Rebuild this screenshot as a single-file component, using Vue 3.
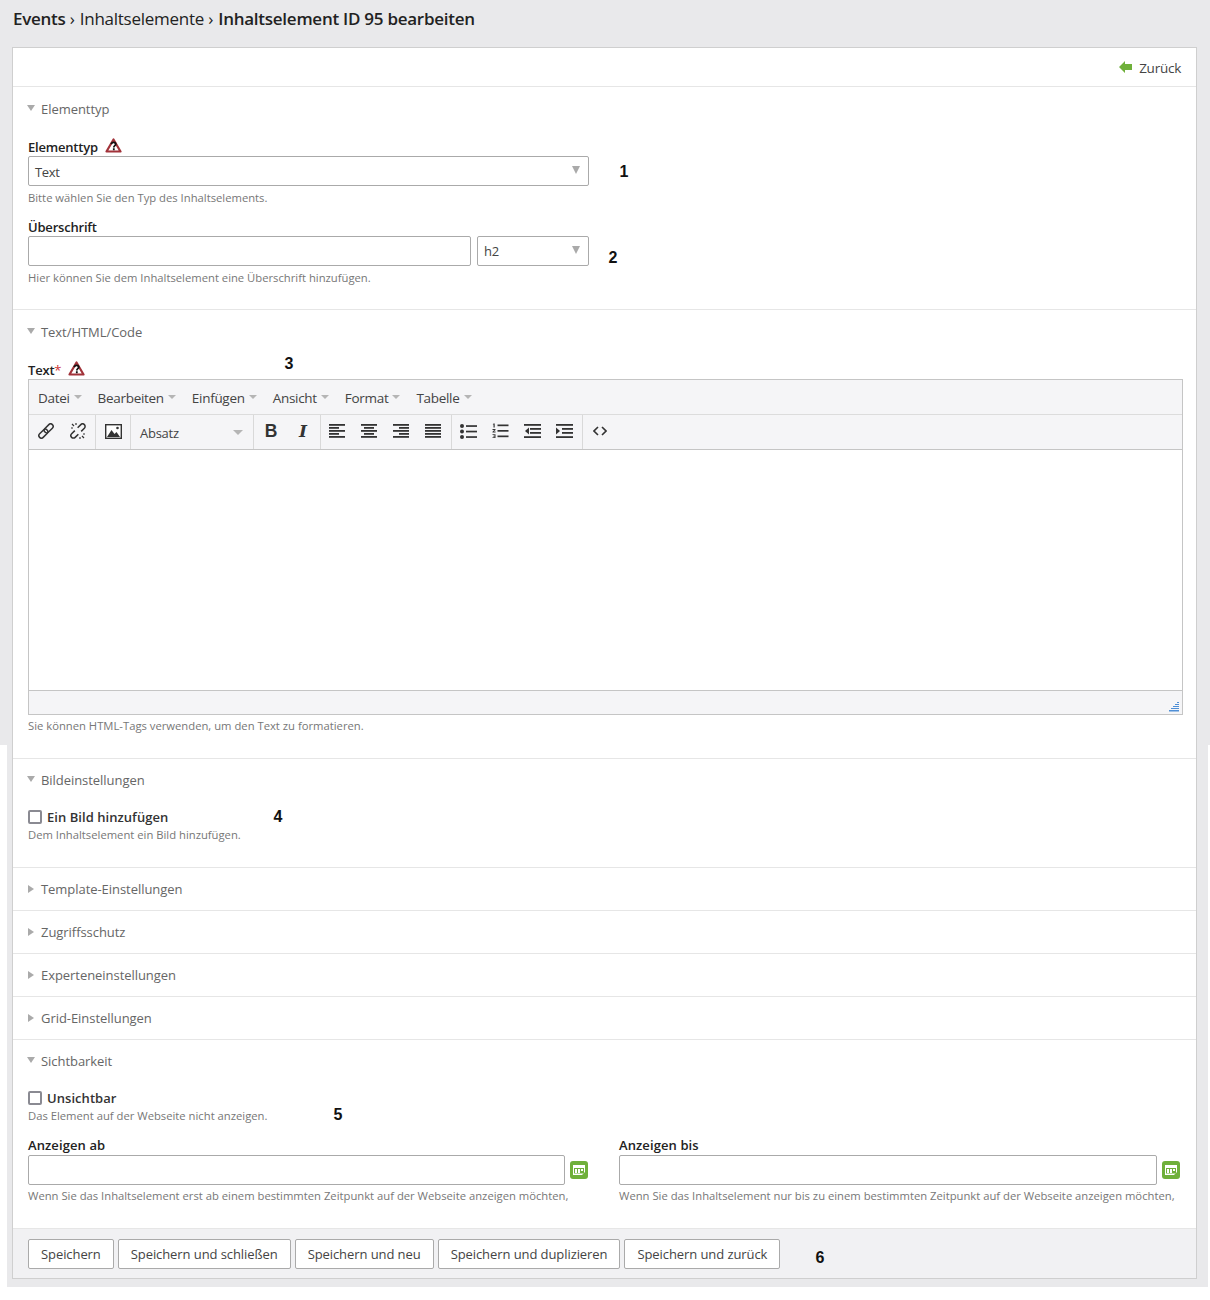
<script setup>
const menu = ['Datei', 'Bearbeiten', 'Einfügen', 'Ansicht', 'Format', 'Tabelle']
const alignRows = [0, 3, 6, 9, 12]
const aligns = [
  [[0, 16], [0, 10], [0, 16], [0, 10], [0, 16]],
  [[0, 16], [3, 10], [0, 16], [3, 10], [0, 16]],
  [[0, 16], [6, 10], [0, 16], [6, 10], [0, 16]],
  [[0, 16], [0, 16], [0, 16], [0, 16], [0, 16]]
]
const collapsed = ['Template-Einstellungen', 'Zugriffsschutz', 'Experteneinstellungen', 'Grid-Einstellungen']
const buttons = ['Speichern', 'Speichern und schließen', 'Speichern und neu', 'Speichern und duplizieren', 'Speichern und zurück']
const callouts = [
  { n: 1, x: 619, y: 163 },
  { n: 2, x: 608, y: 249 },
  { n: 3, x: 284, y: 355 },
  { n: 4, x: 273, y: 808 },
  { n: 5, x: 333, y: 1106 },
  { n: 6, x: 815, y: 1249 }
]
</script>

<template>
  <div class="page">
    <h1 class="crumbs">Events <span class="sep">›</span> <span class="mid">Inhaltselemente</span> <span class="sep">›</span> Inhaltselement ID 95 bearbeiten</h1>

    <main class="panel">
      <div class="back-row">
        <a class="back">
          <svg width="14" height="12" viewBox="0 0 14 12"><path d="M0 6 6 0v3h7v6H6v3z" fill="#6fb03a" /></svg>
          Zurück
        </a>
      </div>

      <section class="sec s1">
        <div class="legend"><i class="tri down"></i>Elementtyp</div>
        <label class="lbl">Elementtyp
          <svg class="warn" width="17" height="15" viewBox="0 0 17 15"><path d="M8.5 1.500 15.500 13.500H1.500z" fill="#fff" stroke="#a2333a" stroke-width="2.200" stroke-linejoin="round" /><path d="M6.300 6.200c.3-2.400 4.400-2.400 4.400 0 0 1.500-1.900 1.500-1.900 3.300M8.800 10.300v2" fill="none" stroke="#111" stroke-width="1.800" /></svg>
        </label>
        <div class="select full">Text<i class="tri sel"></i></div>
        <p class="hint">Bitte wählen Sie den Typ des Inhaltselements.</p>
        <label class="lbl gap">Überschrift</label>
        <div class="row heading">
          <div class="input head-input"></div>
          <div class="select small">h2<i class="tri sel"></i></div>
        </div>
        <p class="hint">Hier können Sie dem Inhaltselement eine Überschrift hinzufügen.</p>
      </section>

      <section class="sec s2">
        <div class="legend"><i class="tri down"></i>Text/HTML/Code</div>
        <label class="lbl">Text<span class="req">*</span>
          <svg class="warn" width="17" height="15" viewBox="0 0 17 15"><path d="M8.5 1.500 15.500 13.500H1.500z" fill="#fff" stroke="#a2333a" stroke-width="2.200" stroke-linejoin="round" /><path d="M6.300 6.200c.3-2.400 4.400-2.400 4.400 0 0 1.500-1.900 1.500-1.900 3.300M8.800 10.300v2" fill="none" stroke="#111" stroke-width="1.800" /></svg>
        </label>
        <div class="editor">
          <div class="menubar">
            <span v-for="m in menu" :key="m" class="menu-item">{{ m }}<i class="caret"></i></span>
          </div>
          <div class="toolbar">
            <div class="group g-links">
              <span class="tb">
                <svg width="16" height="16" viewBox="0 0 16 16" fill="none" stroke="#333" stroke-width="1.500"><g transform="rotate(45 8 8)"><rect x="5.500" y="-1" width="5" height="10.500" rx="2.500" /><rect x="5.500" y="6.500" width="5" height="10.500" rx="2.500" /></g></svg>
              </span>
              <span class="tb">
                <svg width="16" height="16" viewBox="0 0 16 16" fill="none" stroke="#333" stroke-width="1.500"><g transform="rotate(45 8 8)"><path d="M5.500 6V1.500a2.500 2.500 0 0 1 5 0V6M5.500 10v4.500a2.500 2.500 0 0 0 5 0V10" /></g><path d="M4 3 2 1M6 2V0M3 5H1M12 13l2 2M10 14v2M13 11h2" stroke-width="1.200" /></svg>
              </span>
            </div>
            <div class="group g-img">
              <svg width="17" height="15" viewBox="0 0 17 15"><rect x=".7" y=".7" width="15.600" height="13.600" fill="#fff" stroke="#333" stroke-width="1.400" /><path d="M2 13 6.500 6l3 4 2-2 3.500 5z" fill="#333" /><circle cx="12.500" cy="4" r="1.300" fill="#333" /></svg>
            </div>
            <div class="group g-format">Absatz<i class="caret big"></i></div>
            <div class="group g-style">
              <span class="tb glyph-b">B</span>
              <span class="tb glyph-i">I</span>
            </div>
            <div class="group g-align">
              <span v-for="(a, i) in aligns" :key="i" class="tb">
                <svg width="16" height="14" viewBox="0 0 16 14"><rect v-for="(l, j) in a" :key="j" :x="l[0]" :y="alignRows[j]" :width="l[1]" height="1.800" fill="#333" /></svg>
              </span>
            </div>
            <div class="group g-lists">
              <span class="tb">
                <svg width="17" height="15" viewBox="0 0 17 15" fill="#333"><circle cx="2" cy="2" r="2" /><circle cx="2" cy="7.500" r="2" /><circle cx="2" cy="13" r="2" /><rect x="6" y="1.200" width="11" height="1.700" /><rect x="6" y="6.700" width="11" height="1.700" /><rect x="6" y="12.200" width="11" height="1.700" /></svg>
              </span>
              <span class="tb">
                <svg width="17" height="16" viewBox="0 0 17 16" fill="#333"><rect x="5.500" y="1.500" width="11" height="1.700" /><rect x="5.500" y="7" width="11" height="1.700" /><rect x="5.500" y="12.500" width="11" height="1.700" /><path d="M1.500.5h1.200v4H1.500V1.500H.700zM.5 6h3v.9L1.800 8.600h1.800v.9H.5v-.8l1.800-1.800H.5zM.5 11.200h3v3.800h-3v-.8h2v-.7H1.200v-.7h1.300v-.7h-2z" /></svg>
              </span>
              <span class="tb">
                <svg width="17" height="14" viewBox="0 0 17 14" fill="#333"><rect width="17" height="1.800" /><rect y="12.200" width="17" height="1.800" /><rect x="6" y="4" width="11" height="1.800" /><rect x="6" y="8" width="11" height="1.800" /><path d="M5 3.500v7L1 7z" /></svg>
              </span>
              <span class="tb">
                <svg width="17" height="14" viewBox="0 0 17 14" fill="#333"><rect width="17" height="1.800" /><rect y="12.200" width="17" height="1.800" /><rect x="6" y="4" width="11" height="1.800" /><rect x="6" y="8" width="11" height="1.800" /><path d="M0 3.500v7L4 7z" /></svg>
              </span>
            </div>
            <div class="group g-code">
              <span class="tb">
                <svg width="14" height="10" viewBox="0 0 14 10" fill="none" stroke="#333" stroke-width="1.600"><path d="M5 1 1 5l4 4M9 1l4 4-4 4" /></svg>
              </span>
            </div>
          </div>
          <div class="edit-area"></div>
          <div class="status">
            <svg width="10" height="10" viewBox="0 0 10 10" fill="#4f8fd6"><rect x="8" width="2" height="1" /><rect x="6" y="2" width="4" height="1" /><rect x="4" y="4" width="6" height="1" /><rect x="2" y="6" width="8" height="1" /><rect y="8" width="10" height="1.500" /></svg>
          </div>
        </div>
        <p class="hint near">Sie können HTML-Tags verwenden, um den Text zu formatieren.</p>
      </section>

      <section class="sec s3">
        <div class="legend"><i class="tri down"></i>Bildeinstellungen</div>
        <label class="check"><i class="box"></i>Ein Bild hinzufügen</label>
        <p class="hint tight">Dem Inhaltselement ein Bild hinzufügen.</p>
      </section>

      <section v-for="c in collapsed" :key="c" class="sec closed">
        <div class="legend"><i class="tri right"></i>{{ c }}</div>
      </section>

      <section class="sec s4">
        <div class="legend"><i class="tri down"></i>Sichtbarkeit</div>
        <label class="check"><i class="box"></i>Unsichtbar</label>
        <p class="hint tight">Das Element auf der Webseite nicht anzeigen.</p>
        <div class="dates">
          <div class="date-col">
            <label class="lbl">Anzeigen ab</label>
            <div class="row">
              <div class="input grow"></div>
              <span class="cal"><svg width="12" height="10" viewBox="0 0 12 10"><path d="M0 0h12v7L9 10H0z" fill="#fff" /><path d="M1 3h10v5.500H1z" fill="#6fb03a" /><path d="M2 4h2v4H2zM5 4h2v4H5zM8 4h2v2H8z" fill="#fff" /></svg></span>
            </div>
            <p class="hint near">Wenn Sie das Inhaltselement erst ab einem bestimmten Zeitpunkt auf der Webseite anzeigen möchten,</p>
          </div>
          <div class="date-col">
            <label class="lbl">Anzeigen bis</label>
            <div class="row">
              <div class="input grow"></div>
              <span class="cal"><svg width="12" height="10" viewBox="0 0 12 10"><path d="M0 0h12v7L9 10H0z" fill="#fff" /><path d="M1 3h10v5.500H1z" fill="#6fb03a" /><path d="M2 4h2v4H2zM5 4h2v4H5zM8 4h2v2H8z" fill="#fff" /></svg></span>
            </div>
            <p class="hint near">Wenn Sie das Inhaltselement nur bis zu einem bestimmten Zeitpunkt auf der Webseite anzeigen möchten,</p>
          </div>
        </div>
      </section>

      <footer class="actions">
        <button v-for="b in buttons" :key="b" type="button" class="btn">{{ b }}</button>
      </footer>
    </main>

    <b v-for="c in callouts" :key="c.n" class="callout" :style="{ left: c.x + 'px', top: c.y + 'px' }">{{ c.n }}</b>
  </div>
</template>

<style>
body { margin: 0; background: #fff; }
</style>

<style scoped>
.page {
  position: relative;
  width: 1210px;
  height: 1300px;
  overflow: hidden;
  box-sizing: border-box;
  padding: 0 13px 0 12px;
  font-family: "Open Sans", "Liberation Sans", sans-serif;
  font-size: 13px;
  color: #222;
  background:
    linear-gradient(#e9e9eb, #e9e9eb) 0 0 / 100% 745px no-repeat,
    linear-gradient(#e9e9eb, #e9e9eb) 7px 0 / 1201px 1287px no-repeat,
    #fff;
}
.crumbs {
  margin: 0;
  height: 47px;
  padding: 7px 0 0 1px;
  box-sizing: border-box;
  font-size: 17px;
  line-height: 23px;
  font-weight: 600;
  letter-spacing: -.26px;
  color: #222;
}
.crumbs .mid, .crumbs .sep { font-weight: 400; }
.crumbs .sep { margin: 0 1px 0 0; }
.panel {
  background: #fff;
  border: 1px solid #cfcfcf;
  height: 1232px;
  box-sizing: border-box;
}
.back-row {
  height: 39px;
  box-sizing: border-box;
  border-bottom: 1px solid #e6e6e6;
  display: flex;
  justify-content: flex-end;
  align-items: center;
  padding: 1px 15px 0 0;
}
.back { display: flex; align-items: center; gap: 6px; color: #444; font-size: 13.500px; letter-spacing: -.25px; }
.back svg { margin-top: -1px; }
.sec { padding: 0 13px 24px 15px; border-bottom: 1px solid #e6e6e6; }
.sec.s1 { padding-bottom: 23px; }
.sec.closed { padding-bottom: 0; }
.legend {
  height: 42px;
  display: flex;
  align-items: center;
  color: #666;
  font-size: 13px;
  letter-spacing: -.05px;
}
.s1 .legend, .s2 .legend { box-sizing: border-box; padding-top: 2px; }
.tri { display: block; width: 0; height: 0; flex: none; }
.tri.down {
  border-left: 4px solid transparent;
  border-right: 4px solid transparent;
  border-top: 6px solid #aaa;
  margin: -3px 6px 0 -1px;
}
.tri.right {
  border-top: 4px solid transparent;
  border-bottom: 4px solid transparent;
  border-left: 6px solid #aaa;
  margin: -1px 7px 0 0;
}
.tri.sel {
  border-left: 4.500px solid transparent;
  border-right: 4.500px solid transparent;
  border-top: 8px solid #aaa;
  margin: -3px 8px 0 auto;
}
.lbl {
  display: flex;
  align-items: center;
  height: 18px;
  margin-top: 9px;
  font-weight: 600;
  color: #222;
  letter-spacing: -.2px;
}
.lbl.gap { margin-top: 12px; }
.req { color: #c33; font-weight: 400; align-self: flex-start; }
.warn { margin: -3px 0 0 7px; }
.select, .input {
  height: 30px;
  box-sizing: border-box;
  border: 1px solid #aaa;
  border-radius: 2px;
  background: #fff;
}
.select {
  display: flex;
  align-items: center;
  padding-left: 6px;
  color: #444;
  letter-spacing: -.3px;
}
.select.full { width: 561px; padding-top: 2px; }
.select.full .tri.sel { margin-top: -5px; }
.select.small { width: 112px; }
.row { display: flex; align-items: center; }
.heading { gap: 6px; width: 561px; }
.head-input { width: 443px; }
.grow { flex: 1; }
.hint {
  margin: 4px 0 0;
  height: 16px;
  font-size: 11.250px;
  line-height: 16px;
  color: #777;
  white-space: nowrap;
}
.hint.near { margin-top: 3px; }
.hint.tight { margin-top: 1px; }
.editor { border: 1px solid #c5c5c5; height: 336px; box-sizing: border-box; display: flex; flex-direction: column; }
.menubar {
  height: 35px;
  box-sizing: border-box;
  border-bottom: 1px solid #dcdcdc;
  background: #f5f5f7;
  display: flex;
  align-items: center;
  padding: 2px 0 0 9px;
  color: #444;
  font-size: 13.500px;
  letter-spacing: -.3px;
}
.menu-item { display: flex; align-items: center; margin-right: 16px; }
.caret {
  display: block;
  width: 0;
  height: 0;
  border-left: 4px solid transparent;
  border-right: 4px solid transparent;
  border-top: 4px solid #b5b5b5;
  margin: -3px 0 0 4px;
}
.toolbar {
  height: 35px;
  box-sizing: border-box;
  border-bottom: 1px solid #c5c5c5;
  background: #f5f5f7;
  display: flex;
}
.group { display: flex; align-items: center; justify-content: center; border-right: 1px solid #d9d9d9; box-sizing: border-box; }
.tb { display: flex; width: 32px; height: 32px; margin-top: -2px; align-items: center; justify-content: center; flex: none; }
.g-links { width: 67px; }
.g-img { width: 35px; }
.g-img svg { margin-top: -2px; }
.g-format { width: 123px; justify-content: flex-start; padding: 2px 0 0 9px; color: #444; letter-spacing: -.25px; }
.g-format .big { border-left-width: 5px; border-right-width: 5px; border-top-width: 5px; margin: -1px 10px 0 auto; }
.g-style { width: 67px; }
.g-align { width: 131px; justify-content: flex-start; }
.g-lists { width: 131px; justify-content: flex-start; }
.g-code { width: 34px; border-right: 0; }
.glyph-b { font: 700 17.500px "Liberation Sans", sans-serif; color: #333; }
.glyph-i { font: italic 700 17px "DejaVu Serif", serif; color: #333; }
.edit-area { flex: 1; background: #fff; }
.status {
  height: 24px;
  box-sizing: border-box;
  border-top: 1px solid #c5c5c5;
  background: #f5f5f7;
  display: flex;
  align-items: flex-end;
  justify-content: flex-end;
  padding: 0 3px 2px 0;
}
.check {
  display: flex;
  align-items: center;
  height: 18px;
  margin-top: 7px;
  font-weight: 600;
  color: #333;
  letter-spacing: .05px;
}
.box {
  display: block;
  width: 14px;
  height: 14px;
  box-sizing: border-box;
  border: 2px solid #8a8a92;
  border-radius: 2px;
  margin-right: 5px;
  background: #fff;
}
.dates { display: grid; grid-template-columns: 561px 562px; column-gap: 30px; margin-top: 11px; }
.dates .lbl { margin: 0; height: 20px; letter-spacing: .1px; padding-bottom: 1px; box-sizing: border-box; }
.cal {
  display: flex;
  align-items: center;
  justify-content: center;
  width: 18px;
  height: 18px;
  margin: 0 1px 0 5px;
  border-radius: 3px;
  background: #6fb03a;
}
.actions {
  display: flex;
  gap: 4px;
  padding: 10px 15px 0;
  height: 49px;
  box-sizing: border-box;
  background: #f1f1f3;
}
.btn {
  height: 30px;
  padding: 0 12px;
  border: 1px solid #aaa;
  border-radius: 2px;
  background: #fff;
  color: #444;
  font: 13px "Open Sans", "Liberation Sans", sans-serif;
  letter-spacing: -.08px;
}
.callout {
  position: absolute;
  width: 10px;
  text-align: center;
  font: 700 16px/18px "Liberation Sans", sans-serif;
  color: #111;
}
</style>
